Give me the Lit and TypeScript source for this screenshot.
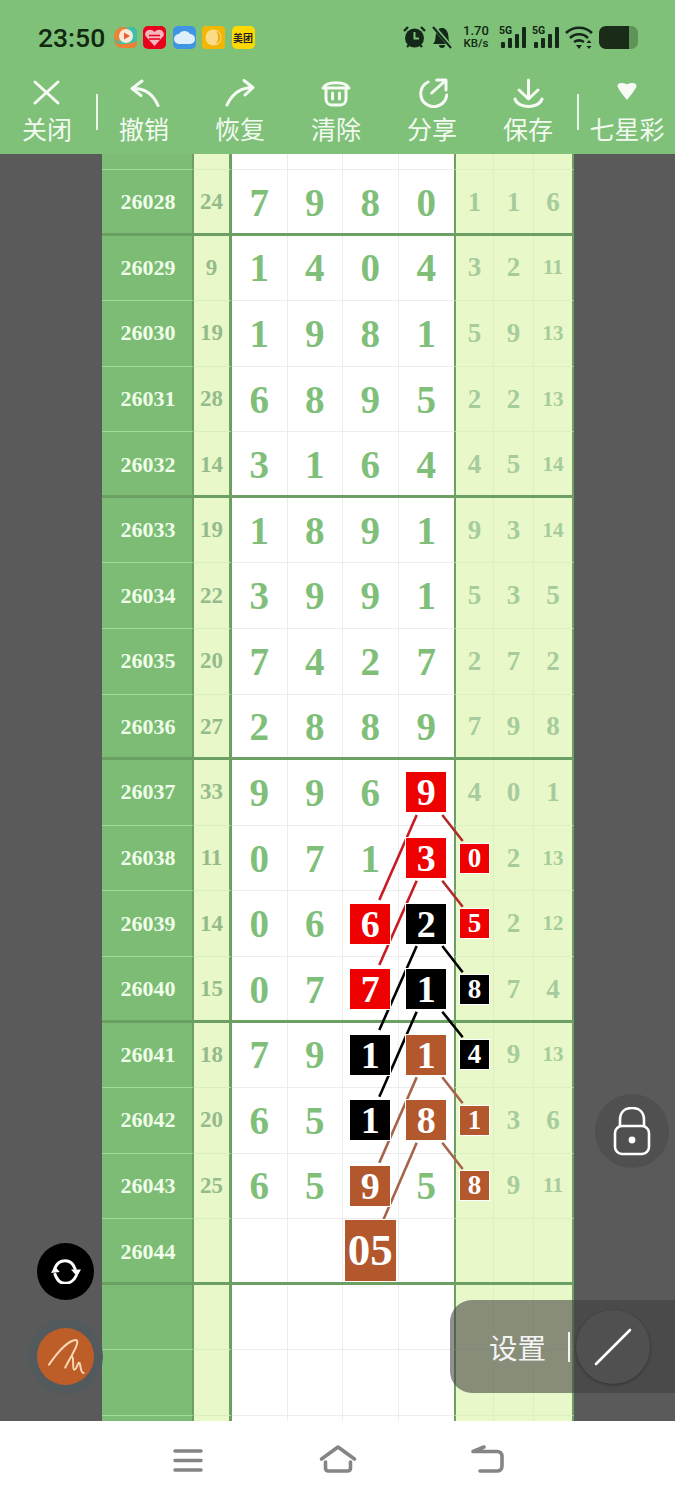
import { LitElement, html, css, svg } from "lit";
import { customElement } from "lit/decorators.js";

type Row = [string, string, string[], string[]];

const ROWS: Row[] = [
  ["26028", "24", ["7", "9", "8", "0"], ["1", "1", "6"]],
  ["26029", "9", ["1", "4", "0", "4"], ["3", "2", "11"]],
  ["26030", "19", ["1", "9", "8", "1"], ["5", "9", "13"]],
  ["26031", "28", ["6", "8", "9", "5"], ["2", "2", "13"]],
  ["26032", "14", ["3", "1", "6", "4"], ["4", "5", "14"]],
  ["26033", "19", ["1", "8", "9", "1"], ["9", "3", "14"]],
  ["26034", "22", ["3", "9", "9", "1"], ["5", "3", "5"]],
  ["26035", "20", ["7", "4", "2", "7"], ["2", "7", "2"]],
  ["26036", "27", ["2", "8", "8", "9"], ["7", "9", "8"]],
  ["26037", "33", ["9", "9", "6", "9"], ["4", "0", "1"]],
  ["26038", "11", ["0", "7", "1", "3"], ["0", "2", "13"]],
  ["26039", "14", ["0", "6", "6", "2"], ["5", "2", "12"]],
  ["26040", "15", ["0", "7", "7", "1"], ["8", "7", "4"]],
  ["26041", "18", ["7", "9", "1", "1"], ["4", "9", "13"]],
  ["26042", "20", ["6", "5", "1", "8"], ["1", "3", "6"]],
  ["26043", "25", ["6", "5", "9", "5"], ["8", "9", "11"]],
  ["26044", "", ["", "", "05", ""], ["", "", ""]],
  ["", "", ["", "", "", ""], ["", "", ""]],
  ["", "", ["", "", "", ""], ["", "", ""]],
  ["", "", ["", "", "", ""], ["", "", ""]],
];

// rows that end a block of the table get the heavy rule
const HEAVY = new Set(["26028", "26032", "26036", "26040", "26044"]);

// "period:d<col>" or "period:r<col>" -> box colour
const MARKS: Record<string, string> = {
  "26037:d3": "red",
  "26038:d3": "red",
  "26038:r0": "red",
  "26039:d2": "red",
  "26039:d3": "black",
  "26039:r0": "red",
  "26040:d2": "red",
  "26040:d3": "black",
  "26040:r0": "black",
  "26041:d2": "black",
  "26041:d3": "brown",
  "26041:r0": "black",
  "26042:d2": "black",
  "26042:d3": "brown",
  "26042:r0": "brown",
  "26043:d2": "brown",
  "26043:r0": "brown",
  "26044:d2": "brown",
};

// links between the marked boxes, in table coordinates (page x - 102, page y - 154)
const LINKS: [string, number, number, number, number][] = [
  ["#c81a22", 314.7, 661, 277.3, 746],
  ["#c81a22", 314.7, 726.7, 277.3, 811],
  ["#b02a2a", 340.3, 661, 360.7, 687],
  ["#b02a2a", 340.3, 726.7, 360.7, 752.7],
  ["#000", 314.7, 792, 277.3, 876],
  ["#000", 314.7, 857.7, 277.3, 942.7],
  ["#000", 340.3, 792, 360.7, 818.3],
  ["#000", 340.3, 857.7, 360.7, 883.3],
  ["#a5644a", 314.7, 923.3, 277.3, 1008.7],
  ["#a5644a", 314.7, 988.7, 281.3, 1066],
  ["#a5644a", 340.3, 923.3, 360.7, 949.3],
  ["#a5644a", 340.3, 988.7, 360.7, 1015],
];

const TOOLS: [string, unknown][] = [
  ["撤销", svg`<path d="M18 3 8 10.5l9 7M8 10.5c12-.5 21 5 26 17"/>`],
  ["恢复", svg`<path d="M24 2.5 33 9.5l-8 7.5M33 9.5C20 9.5 12 16 7 27"/>`],
  ["清除", svg`<path d="M7.5 10C10 3 30 3 32.5 10M7 10h26M10 10v11c0 4 3 6 6 6h8c3 0 6-2 6-6V10M16.5 15v6M23.5 15v6"/>`],
  ["分享", svg`<path d="M16 4A13 13 0 1 0 34.7 17M19.7 15 33 3M24.7 2H34v10"/>`],
  ["保存", svg`<path d="M20.5 2v18M11 12l9.5 9 9.5-9M7 21c3 10 24 10 27 0"/>`],
];

@customElement("app-root")
export class AppRoot extends LitElement {
  static styles = css`
    :host {
      display: flex;
      flex-direction: column;
      position: relative;
      width: 675px;
      height: 1500px;
      overflow: hidden;
      background: #fff;
      font-family: "Liberation Serif", serif;
    }
    .top {
      height: 154px;
      flex: none;
      background: #80c17a;
      font-family: "Noto Sans CJK SC", "Noto Sans", sans-serif;
    }
    .status {
      height: 72px;
      padding: 2px 37px 0 38px;
      box-sizing: border-box;
      display: flex;
      align-items: center;
      color: #10280f;
    }
    .time {
      font: 500 26.5px Roboto, sans-serif;
      width: 75px;
    }
    .apps {
      display: flex;
      gap: 6.5px;
    }
    .apps svg,
    .mt {
      width: 23px;
      height: 23px;
      display: block;
    }
    .apps svg.wide {
      width: 25px;
      margin-right: -1.5px;
    }
    .mt {
      background: #ffd900;
      border-radius: 5px;
      color: #222;
      font: 700 10px/23px "Noto Sans CJK SC", sans-serif;
      text-align: center;
      overflow: hidden;
    }
    .sysicons {
      margin-left: auto;
      display: flex;
      align-items: center;
    }
    .speed {
      font: 500 13px/12px Roboto, sans-serif;
      text-align: center;
      width: 28px;
      margin: 0 9px 0 8px;
    }
    .speed small {
      font-size: 11.5px;
      display: block;
    }
    .signal {
      position: relative;
      width: 28px;
      height: 24px;
      margin-right: 5px;
    }
    .signal span {
      position: absolute;
      left: 0;
      top: 0;
      font: 700 10.5px/11px Roboto, sans-serif;
    }
    .tools {
      height: 82px;
      display: flex;
      color: #f2faf0;
    }
    .tool {
      width: 96px;
      flex: none;
      display: flex;
      flex-direction: column;
      align-items: center;
      font-size: 25px;
      line-height: 36px;
    }
    .tool.first {
      width: 94px;
    }
    .tool svg {
      width: 40px;
      height: 30px;
      margin-top: 6px;
      fill: none;
      stroke: #f6fbf4;
      stroke-width: 3;
      stroke-linecap: round;
      stroke-linejoin: round;
    }
    .tool span {
      margin-top: 2px;
    }
    .sep {
      width: 2px;
      height: 36px;
      margin-top: 22px;
      background: #e9f6e6;
      flex: none;
    }
    .sep.a {
      margin-left: 2px;
      margin-right: -2px;
    }
    .sep.b {
      margin-left: 1px;
    }
    .main {
      flex: 1;
      background: #5a5a5a;
      overflow: hidden;
      display: flex;
      justify-content: center;
      padding-left: 1px;
    }
    .table {
      position: relative;
      width: 472px;
      flex: none;
      align-self: flex-start;
    }
    .links {
      position: absolute;
      left: 0;
      top: 0;
      z-index: 1;
      pointer-events: none;
    }
    .row {
      display: grid;
      grid-template-columns: 92px 38px repeat(4, 55.5px) 40px 40px 40px;
      height: 65.58px;
      box-sizing: border-box;
    }
    .row.stub {
      height: 16px;
    }
    .row.heavy {
      border-bottom: 3px solid #6c9f64;
    }
    .row > div {
      display: flex;
      align-items: center;
      justify-content: center;
      box-sizing: border-box;
      font-weight: 700;
    }
    .row.heavy > div {
      padding-top: 2px;
      border-bottom: none;
    }
    .period {
      background: #7cbc74;
      color: #f0fde9;
      font-size: 22px;
      padding-left: 2px;
      border-right: 2px solid #6c9f64;
      border-bottom: 1px solid #a2d89a;
    }
    .sum {
      background: #e9f8c9;
      color: #95bb8b;
      font-size: 23px;
      border-right: 3px solid #6c9f64;
      border-bottom: 1px solid #d9eebb;
    }
    .digit {
      background: #fff;
      color: #7fbf7a;
      font-size: 39px;
      border-right: 1px solid #ececec;
      border-bottom: 1px solid #ececec;
    }
    .digit.end {
      border-right: none;
    }
    .right {
      background: #e9f8c9;
      color: #a6cc9d;
      font-size: 27px;
      border-right: 1px solid #dcf0c0;
      border-bottom: 1px solid #dcf0c0;
    }
    .right.two {
      font-size: 21px;
    }
    .right.start {
      border-left: 2px solid #6c9f64;
    }
    .right.end {
      border-right: 2px solid #6c9f64;
    }
    .box {
      position: relative;
      z-index: 2;
      color: #fff;
      display: flex;
      align-items: center;
      justify-content: center;
      width: 40px;
      height: 40px;
      font-size: 38px;
      outline: 1px solid #fff;
    }
    .right .box {
      width: 29px;
      height: 29px;
      font-size: 27px;
    }
    .box.big {
      width: 51px;
      height: 61px;
      margin: -4px 0 -1px;
      font-size: 45px;
    }
    .box.red {
      background: #ee0000;
    }
    .box.black {
      background: #000;
    }
    .box.brown {
      background: #b3582d;
    }
    .nav {
      height: 79px;
      flex: none;
      background: #fff;
      display: grid;
      grid-template-columns: 150px 150px 150px;
      justify-content: center;
      justify-items: center;
      padding-top: 24px;
      box-sizing: border-box;
    }
    .nav svg {
      width: 34px;
      height: 32px;
      fill: none;
      stroke: #858585;
      stroke-width: 3.6;
      stroke-linecap: round;
      stroke-linejoin: round;
      overflow: visible;
    }
    .nav svg.home {
      width: 40px;
    }
    .fab {
      position: absolute;
      border-radius: 50%;
      display: flex;
      align-items: center;
      justify-content: center;
      z-index: 3;
    }
    .refresh {
      left: 37px;
      top: 1243px;
      width: 57px;
      height: 57px;
      background: #000;
    }
    .pen {
      left: 28px;
      top: 1319px;
      width: 75px;
      height: 75px;
      background: #525a5e;
    }
    .pen i {
      width: 57px;
      height: 57px;
      border-radius: 50%;
      background: #bd5d28;
      display: block;
    }
    .pen svg {
      position: absolute;
      left: 9px;
      top: 9px;
    }
    .lock {
      left: 595px;
      top: 1094px;
      width: 74px;
      height: 74px;
      background: #505050;
    }
    .lock svg {
      margin-top: 2px;
    }
    .settings {
      position: absolute;
      z-index: 3;
      left: 450px;
      top: 1300px;
      width: 225px;
      height: 93px;
      box-sizing: border-box;
      border-radius: 22px 0 0 22px;
      background: rgba(64, 64, 64, 0.58);
      display: flex;
      align-items: center;
      padding-left: 39px;
      color: #f4f4f4;
      font: 28.5px "Noto Sans CJK SC", sans-serif;
    }
    .settings b {
      width: 2px;
      height: 30px;
      background: #f4f4f4;
      margin: 0 0 0 22px;
    }
    .pencil {
      width: 74px;
      height: 74px;
      margin-left: 6px;
      border-radius: 50%;
      background: #505050;
      box-shadow: 0 1px 3px rgba(0, 0, 0, 0.35);
      display: flex;
      align-items: center;
      justify-content: center;
    }
  `;

  private cell(period: string, key: string, value: string) {
    const mark = MARKS[`${period}:${key}`];
    if (!mark) return value;
    return html`<span class="box ${mark} ${value.length > 1 ? "big" : ""}">${value}</span>`;
  }

  private renderRow(row: Row) {
    const [period, sum, digits, rights] = row;
    return html`<div class="row ${HEAVY.has(period) ? "heavy" : ""}">
      <div class="period">${period}</div>
      <div class="sum">${sum}</div>
      ${digits.map(
        (d, i) => html`<div class="digit ${i == 3 ? "end" : ""}">${this.cell(period, "d" + i, d)}</div>`
      )}
      ${rights.map(
        (r, i) => html`<div class="right ${r.length > 1 ? "two" : ""} ${i == 0 ? "start" : ""} ${i == 2 ? "end" : ""}">
          ${this.cell(period, "r" + i, r)}
        </div>`
      )}
    </div>`;
  }

  private renderStatus() {
    return html`<div class="status">
      <div class="time">23:50</div>
      <div class="apps">
        <svg class="wide" viewBox="0 0 25 23">
          <path d="M1 12C1 5 5 1 10 1h9c3 0 5 2 5 5v11c0 3-2 5-5 5H9c-5 0-8-4-8-10z" fill="#3dbfa8" />
          <path d="M1 12c1 6 5 6 10 6 5 0 9-1 13-3v2c0 3-2 5-5 5H9c-5 0-8-4-8-10z" fill="#ee8232" />
          <path d="M1 12C1 5 5 1 10 1c3 0 4 1 5 2-6 1-10 5-8 13-3-1-5-2-6-4z" fill="#ee8232" />
          <circle cx="13" cy="10" r="7" fill="#fbe9d8" />
          <path d="M11 6.5l6 3.5-6 3.5z" fill="#e8603a" />
        </svg>
        <svg viewBox="0 0 23 23">
          <rect width="23" height="23" rx="5" fill="#e8001c" />
          <path d="M11.5 20 2.5 10c-2-5 5-9 9-4 4-5 11-1 9 4z" fill="#f6b6bc" />
          <path d="M6 9.5h11M6 13h11" stroke="#e8001c" stroke-width="1.4" />
        </svg>
        <svg viewBox="0 0 23 23">
          <rect width="23" height="23" rx="5" fill="#3f94e4" />
          <path d="M6 18a5 5 0 0 1 0-10c2-4 9-4 11 0a5 5 0 0 1 0 10z" fill="#dfeefb" />
        </svg>
        <svg viewBox="0 0 23 23">
          <rect width="23" height="23" rx="4" fill="#f2b705" />
          <circle cx="11.5" cy="11.5" r="8" fill="#fbdc86" />
          <path d="M14 5a7 7 0 0 1 0 13c3-4 3-9 0-13z" fill="#f2a705" />
        </svg>
        <div class="mt">美团</div>
      </div>
      <div class="sysicons">
        <svg width="25" height="24" viewBox="0 0 25 24">
          <circle cx="12.5" cy="13" r="9.5" fill="#14281a" />
          <path d="M12.5 7v6.5H17" stroke="#80c17a" stroke-width="2" fill="none" />
          <path d="M2 6l4-4M23 6l-4-4M5 22l2-2M20 22l-2-2" stroke="#14281a" stroke-width="2.4" />
        </svg>
        <svg width="24" height="24" viewBox="0 0 24 24" style="margin-left:3px">
          <path d="M3 19c3-3 2-6 3-10 1-5 4-6 6-6s5 1 6 6c1 4 0 7 3 10z" fill="#14281a" />
          <path d="M9 20a3 3 0 0 0 6 0z" fill="#14281a" />
          <path d="M3 1l19 22" stroke="#80c17a" stroke-width="4" />
          <path d="M3 2l18 21" stroke="#14281a" stroke-width="2" />
        </svg>
        <div class="speed">1.70<small>KB/s</small></div>
        <div class="signal">
          <span>5G</span>
          <svg width="28" height="24" viewBox="0 0 28 24" fill="#14281a">
            <rect x="2" y="17" width="4" height="6" rx="1" /><rect x="9" y="13" width="4" height="10" rx="1" />
            <rect x="16" y="9" width="4" height="14" rx="1" /><rect x="23" y="2" width="4" height="21" rx="1" />
          </svg>
        </div>
        <div class="signal">
          <span>5G</span>
          <svg width="28" height="24" viewBox="0 0 28 24" fill="#14281a">
            <rect x="2" y="17" width="4" height="6" rx="1" /><rect x="9" y="13" width="4" height="10" rx="1" />
            <rect x="16" y="9" width="4" height="14" rx="1" /><rect x="23" y="2" width="4" height="21" rx="1" />
          </svg>
        </div>
        <svg width="28" height="24" viewBox="0 0 28 24" style="margin-right:6px">
          <path d="M1 8c7-7 19-7 26 0M5 13c5-5 13-5 18 0M9 17c3-2 7-2 10 0" fill="none" stroke="#14281a" stroke-width="2.6" />
          <path d="M11 20h6l-3 4z" fill="#14281a" />
          <path d="M24 15l2.5 3h-5zM24 24l2.5-3h-5z" fill="#14281a" />
        </svg>
        <svg width="39" height="23" viewBox="0 0 39 23">
          <path d="M29 0h3c4 0 7 3 7 7v9c0 4-3 7-7 7h-3z" fill="#5f9458" />
          <path d="M7 0h23v23H7c-4 0-7-3-7-7V7c0-4 3-7 7-7z" fill="#1a2c18" />
        </svg>
      </div>
    </div>`;
  }

  private renderTools() {
    return html`<div class="tools">
      <div class="tool first">
        <svg viewBox="0 0 40 30"><path d="M8 4l23 21M31 4 8 25" /></svg>
        <span>关闭</span>
      </div>
      <div class="sep a"></div>
      ${TOOLS.map(([label, icon]) => html`<div class="tool"><svg viewBox="0 0 40 30">${icon}</svg><span>${label}</span></div>`)}
      <div class="sep b"></div>
      <div class="tool">
        <svg viewBox="0 0 40 30"><path d="M10.500 8c0-2 1.500-3 4-3 2 0 4 .5 5.500 1.500C21.500 5.500 23.500 5 25.500 5c2.500 0 4 1 4 3 0 2-5.500 9-9.500 14-4-5-9.500-12-9.500-14z" fill="#f6fbf4" stroke="none" /></svg>
        <span>七星彩</span>
      </div>
    </div>`;
  }

  private renderFloating() {
    return html`
      <div class="fab refresh">
        <svg width="30" height="25" viewBox="0 0 30 25" fill="none" stroke="#fff" stroke-width="3" stroke-linecap="round">
          <path d="M4 9C6 4 10 1.7 14 1.7c4 0 8 2 10 8M25 17c-2 5-7 7.3-11 7.3-4 0-8-3-10-9" />
          <path d="M20 10.500h10l-4 7zM0 14l8.700-1-5-6z" fill="#fff" stroke="none" />
        </svg>
      </div>
      <div class="fab pen">
        <i></i>
        <svg width="57" height="57" viewBox="20 260 171 171" fill="none" stroke="#fbd6b4" stroke-width="6" stroke-linecap="round" stroke-linejoin="round">
          <path d="M56 370C80 335 115 295 138 296 150 300 125 340 105 378 102 385 120 345 125 345 132 350 125 385 132 385 140 385 142 360 148 365 152 375 150 395 160 395" />
        </svg>
      </div>
      <div class="fab lock">
        <svg width="40" height="50" viewBox="0 0 40 50" fill="none" stroke="#fff" stroke-width="2.6">
          <path d="M8 20v-7C8 5 13 1 20 1s12 4 12 12v7" />
          <rect x="3" y="19" width="34" height="28" rx="7" />
          <circle cx="20" cy="33" r="3.4" fill="#fff" stroke="none" />
        </svg>
      </div>
      <div class="settings">
        设置<b></b>
        <div class="pencil">
          <svg width="38" height="38" viewBox="0 0 38 38"><path d="M2 36 36 2" stroke="#fff" stroke-width="2.6" stroke-linecap="round" /></svg>
        </div>
      </div>
    `;
  }

  render() {
    return html`
      <div class="top">${this.renderStatus()} ${this.renderTools()}</div>
      <div class="main">
        <div class="table">
          <div class="row stub">
            <div class="period"></div>
            <div class="sum"></div>
            <div class="digit"></div>
            <div class="digit"></div>
            <div class="digit"></div>
            <div class="digit end"></div>
            <div class="right start"></div>
            <div class="right"></div>
            <div class="right end"></div>
          </div>
          ${ROWS.map((r) => this.renderRow(r))}
          <svg class="links" width="472" height="1267">
            ${LINKS.map(([c, x1, y1, x2, y2]) => svg`<line x1=${x1} y1=${y1} x2=${x2} y2=${y2} stroke=${c} stroke-width="2.6" />`)}
          </svg>
        </div>
      </div>
      <div class="nav">
        <svg viewBox="0 0 34 32"><path d="M4 6h26M4 15.500h26M4 25h26" /></svg>
        <svg class="home" viewBox="0 0 40 32"><path d="M3.500 14 20 2l16.500 12M7.500 17v6c0 2 1 3 3 3h19c2 0 3-1 3-3v-6" /></svg>
        <svg viewBox="0 0 34 32"><path d="M13 2 2 6.500h24c3 0 5 2 5 5V21c0 3-2 5-5 5H9" /></svg>
      </div>
      ${this.renderFloating()}
    `;
  }
}
